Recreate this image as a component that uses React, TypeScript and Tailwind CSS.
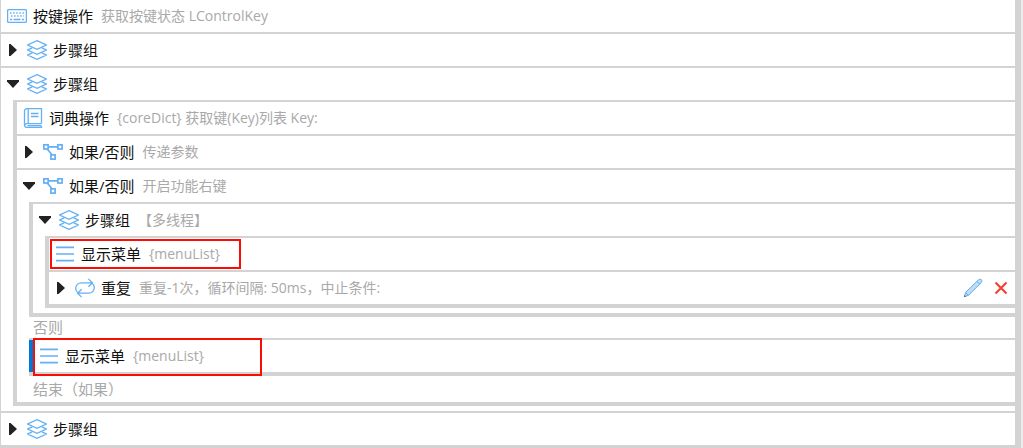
import { ReactNode } from "react";

const FONT = "font-['Open_Sans','Noto_Sans_CJK_SC',sans-serif]";

function Icon({ children }: { children: ReactNode }) {
  return (
    <svg
      viewBox="0 0 20 20"
      className="size-5 shrink-0"
      fill="none"
      stroke="#64b0f5"
      strokeWidth="1.3"
      aria-hidden="true"
    >
      {children}
    </svg>
  );
}

function KeyboardIcon() {
  return (
    <Icon>
      <rect x="0.6" y="3.6" width="18.8" height="12.8" rx="1" />
      <path d="M3 7h14" strokeDasharray="1.5 1.6" />
      <path d="M4 10h13" strokeDasharray="1.5 1.6" />
      <path d="M3 13.5h2M6.5 13.5h7M15 13.5h2" />
    </Icon>
  );
}

function LayersIcon() {
  return (
    <Icon>
      <path d="M10 .7 19.3 5 10 9.3.7 5z" />
      <path d="M14.8 7.9 19.3 10 10 14.3.7 10l4.5-2.1" />
      <path d="M14.8 12.9 19.3 15 10 19.3.7 15l4.5-2.1" />
    </Icon>
  );
}

function BookIcon() {
  return (
    <Icon>
      <path d="M18.5 15.5V.6H4A2.5 2.5 0 0 0 1.5 3v14.2A2.2 2.2 0 0 0 3.7 19.4h14.8v-1.2M18.5 15.6H3.7a1.8 1.8 0 0 0-1.8 1.8M4.5 17.6h14M5.2.8v14.6" />
      <path d="M8 5.5h7.5M8 8.5h7.5" />
    </Icon>
  );
}

function BranchIcon() {
  return (
    <Icon>
      <g strokeWidth="1.7">
        <rect x="0.9" y="2.8" width="4.2" height="4.2" />
        <rect x="14.9" y="2.8" width="4.2" height="4.2" />
        <rect x="7.9" y="12.9" width="4.2" height="4.2" />
        <path d="M5 4.8h10M4.2 7 9 12.8" />
      </g>
    </Icon>
  );
}

function MenuIcon() {
  return (
    <Icon>
      <path d="M1 3.4h18M1 10h18M1 16.6h18" strokeWidth="1.6" />
    </Icon>
  );
}

function RepeatIcon() {
  return (
    <Icon>
      <path d="M3.2 14.8C1.6 13.9.7 12.3.7 10.4.7 7.2 3.2 4.8 6.4 4.8h11M13.4.9l4 3.9-4 3.9" />
      <path d="M16.8 5.2c1.6.9 2.5 2.5 2.5 4.4 0 3.2-2.5 5.6-5.7 5.6h-11M6.6 11.3l-4 3.9 4 3.9" />
    </Icon>
  );
}

function PencilIcon() {
  return (
    <svg viewBox="0 0 20 20" className="size-5" fill="none" aria-hidden="true">
      <path
        d="M1.4 18.6 2.6 14.4 15.4 1.9c.8-.8 2.2-.9 3-.2.7.8.6 2.1-.2 2.9L5.4 17.4z"
        fill="#bbdefb"
        stroke="#6ba9e2"
      />
      <path d="m14 3.3 2.8 2.8M2.6 14.4l2.8 3" stroke="#6ba9e2" />
      <path d="m1 19 .6-2 1.4 1.4z" fill="#37658f" />
    </svg>
  );
}

function Toggle({ open, name }: { open: boolean; name: string }) {
  return (
    <button
      type="button"
      aria-expanded={open}
      aria-label={name}
      className="mr-2 size-3 shrink-0"
    >
      <svg viewBox="0 0 12 12" className="size-3" fill="#222">
        {open ? <path d="M0 2h12v1.5L6 10 0 3.5z" /> : <path d="M2 0h1.5L10 6l-6.5 6H2z" />}
      </svg>
    </button>
  );
}

interface StepProps {
  icon: ReactNode;
  title: string;
  detail?: string;
  open?: boolean;
  selected?: boolean;
  mark?: ReactNode;
  actions?: ReactNode;
}

function Step({ icon, title, detail, open, selected, mark, actions }: StepProps) {
  return (
    <div
      className={`relative flex h-8 items-center whitespace-nowrap pr-1 pl-1.5 ${
        selected ? "border-l-4 border-[#0078d7]" : ""
      }`}
    >
      {open !== undefined && <Toggle open={open} name={title} />}
      {icon}
      <span className="ml-1.5 text-[15px] leading-5 text-[#111]">{title}</span>
      {detail && <span className="ml-2 text-sm leading-5 text-[#a9a9a9]">{detail}</span>}
      {actions && <div className="ml-auto flex gap-2">{actions}</div>}
      {mark}
    </div>
  );
}

function Group({ children }: { children: ReactNode }) {
  return (
    <ul className="ml-3 divide-y-2 divide-[#d3d3d3] border-b-4 border-l-4 border-[#d3d3d3]">
      {children}
    </ul>
  );
}

function Divider() {
  return <div className="ml-3 h-0.5 bg-[#d3d3d3]" />;
}

export default function App() {
  return (
    <main className={`bg-[#ebebeb] pr-0.5 ${FONT}`}>
      <ul className="divide-y-2 divide-[#d3d3d3] border-r-6 border-b-3 border-l border-[#d3d3d3] bg-white">
        <li>
          <Step icon={<KeyboardIcon />} title="按键操作" detail="获取按键状态 LControlKey" />
        </li>
        <li>
          <Step open={false} icon={<LayersIcon />} title="步骤组" />
        </li>
        <li className="pb-[5px]">
          <Step open icon={<LayersIcon />} title="步骤组" />
          <Divider />
          <Group>
            <li>
              <Step icon={<BookIcon />} title="词典操作" detail="{coreDict} 获取键(Key)列表 Key:" />
            </li>
            <li>
              <Step open={false} icon={<BranchIcon />} title="如果/否则" detail="传递参数" />
            </li>
            <li>
              <Step open icon={<BranchIcon />} title="如果/否则" detail="开启功能右键" />
              <Divider />
              <Group>
                <li className="pb-[5px]">
                  <Step open icon={<LayersIcon />} title="步骤组" detail="【多线程】" />
                  <Divider />
                  <Group>
                    <li>
                      <Step
                        icon={<MenuIcon />}
                        title="显示菜单"
                        detail="{menuList}"
                        mark={
                          <div className="absolute top-px left-px h-[30px] w-[191px] border-2 border-[#fb0d04]" />
                        }
                      />
                    </li>
                    <li>
                      <Step
                        open={false}
                        icon={<RepeatIcon />}
                        title="重复"
                        detail="重复-1次，循环间隔: 50ms，中止条件:"
                        actions={
                          <>
                            <button type="button" aria-label="编辑">
                              <PencilIcon />
                            </button>
                            <button type="button" aria-label="删除">
                              <svg viewBox="0 0 20 20" className="size-5" stroke="#f44336" strokeWidth="2.2">
                                <path d="m4.5 4.5 11 11m0-11-11 11" />
                              </svg>
                            </button>
                          </>
                        }
                      />
                    </li>
                  </Group>
                </li>
              </Group>
              <p className="h-[21px] pl-4 text-[15px] leading-[21px] text-[#a9a9a9]">否则</p>
              <div className="ml-3 border-t-2 border-b-4 border-[#d3d3d3]">
                <Step
                  selected
                  icon={<MenuIcon />}
                  title="显示菜单"
                  detail="{menuList}"
                  mark={
                    <div className="absolute -top-0.5 left-0 h-[38px] w-[229px] border-2 border-[#fb0d04]" />
                  }
                />
              </div>
              <p className="h-[26px] pl-4 text-[15px] leading-[26px] text-[#a9a9a9]">结束（如果）</p>
            </li>
          </Group>
        </li>
        <li>
          <Step open={false} icon={<LayersIcon />} title="步骤组" />
        </li>
      </ul>
    </main>
  );
}
